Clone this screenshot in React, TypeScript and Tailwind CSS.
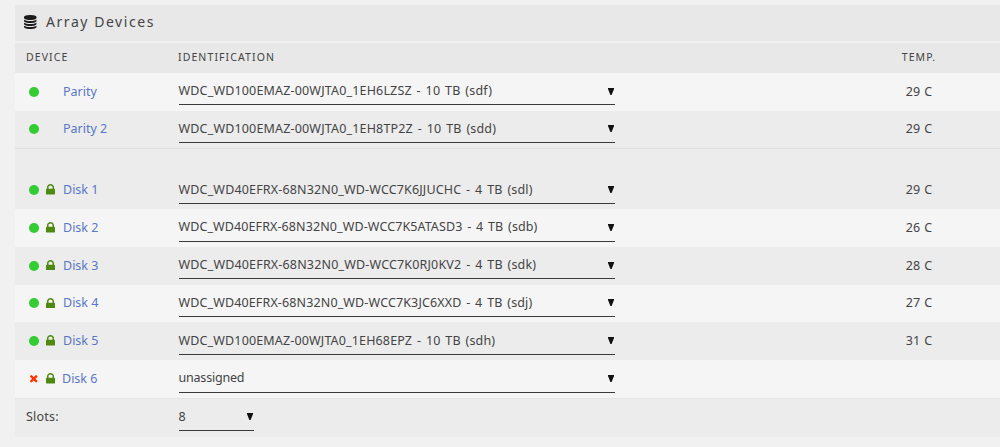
type Device = {
    name: string
    ident: string
    temp?: string
    locked?: boolean
    missing?: boolean
    row: string
    tracking: string
}

const parity: Device[] = [
    { name: 'Parity', ident: 'WDC_WD100EMAZ-00WJTA0_1EH6LZSZ - 10 TB (sdf)', temp: '29 C', row: 'bg-[#f5f5f5]', tracking: 'tracking-[0.17px]' },
    { name: 'Parity 2', ident: 'WDC_WD100EMAZ-00WJTA0_1EH8TP2Z - 10 TB (sdd)', temp: '29 C', row: 'bg-[#ececec]', tracking: 'tracking-[0.17px]' },
]

const disks: Device[] = [
    { name: 'Disk 1', ident: 'WDC_WD40EFRX-68N32N0_WD-WCC7K6JJUCHC - 4 TB (sdl)', temp: '29 C', locked: true, row: 'bg-[#ececec]', tracking: 'tracking-[0.16px]' },
    { name: 'Disk 2', ident: 'WDC_WD40EFRX-68N32N0_WD-WCC7K5ATASD3 - 4 TB (sdb)', temp: '26 C', locked: true, row: 'bg-[#f5f5f5]', tracking: 'tracking-[0.1px]' },
    { name: 'Disk 3', ident: 'WDC_WD40EFRX-68N32N0_WD-WCC7K0RJ0KV2 - 4 TB (sdk)', temp: '28 C', locked: true, row: 'bg-[#ececec]', tracking: 'tracking-[0.17px]' },
    { name: 'Disk 4', ident: 'WDC_WD40EFRX-68N32N0_WD-WCC7K3JC6XXD - 4 TB (sdj)', temp: '27 C', locked: true, row: 'bg-[#f5f5f5]', tracking: 'tracking-[0.13px]' },
    { name: 'Disk 5', ident: 'WDC_WD100EMAZ-00WJTA0_1EH68EPZ - 10 TB (sdh)', temp: '31 C', locked: true, row: 'bg-[#ececec]', tracking: 'tracking-[0.15px]' },
    { name: 'Disk 6', ident: 'unassigned', locked: true, missing: true, row: 'bg-[#f5f5f5]', tracking: 'tracking-[-0.2px]' },
]

const DatabaseIcon = () => (
    <svg viewBox="0 0 1536 1792" className="h-[14px] w-[12.5px] fill-[#1c1c1c]" preserveAspectRatio="none">
        <path d="M768 768q237 0 443-43t325-127v170q0 69-103 128t-280 93.5-385 34.5-385-34.5-280-93.5-103-128v-170q119 84 325 127t443 43zm0 768q237 0 443-43t325-127v170q0 69-103 128t-280 93.5-385 34.5-385-34.5-280-93.5-103-128v-170q119 84 325 127t443 43zm0-384q237 0 443-43t325-127v170q0 69-103 128t-280 93.5-385 34.5-385-34.5-280-93.5-103-128v-170q119 84 325 127t443 43zm0-1152q208 0 385 34.5t280 93.5 103 128v128q0 69-103 128t-280 93.5-385 34.5-385-34.5-280-93.5-103-128v-128q0-69 103-128t280-93.5 385-34.5z" />
    </svg>
)

const LockIcon = () => (
    <svg viewBox="0 128 1152 1408" className="mb-px h-[10.5px] w-[9px] fill-[#4f8a10]" preserveAspectRatio="none">
        <path d="M320 768h512v-192q0-106-75-181t-181-75-181 75-75 181v192zm832 96v576q0 40-28 68t-68 28h-960q-40 0-68-28t-28-68v-576q0-40 28-68t68-28h32v-192q0-184 132-316t316-132 316 132 132 316v192h32q40 0 68 28t28 68z" />
    </svg>
)

const CrossIcon = () => (
    <svg viewBox="110 366 1188 1188" className="ml-px size-[7.5px] fill-[#ff3300]">
        <path d="M1298 1322q0 40-28 68l-136 136q-28 28-68 28t-68-28l-294-294-294 294q-28 28-68 28t-68-28l-136-136q-28-28-28-68t28-68l294-294-294-294q-28-28-28-68t28-68l136-136q28-28 68-28t68 28l294 294 294-294q28-28 68-28t68 28l136 136q28 28 28 68t-28 68l-294 294 294 294q28 28 28 68z" />
    </svg>
)

const Select = ({ value, className }: { value: string; className: string }) => (
    <div className={`flex h-[27.5px] items-center justify-between border-b border-[#3a3a3a] ${className}`}>
        <span className="whitespace-pre [word-spacing:1.4px]">{value}</span>
        <svg viewBox="0 0 6 7" className="mr-px h-[7px] w-[6px] fill-[#111]">
            <path d="M0 0h6v1L3.6 7H2.4L0 1z" />
        </svg>
    </div>
)

const DeviceRow = ({ device }: { device: Device }) => (
    <div className={`flex h-[37.75px] items-center ${device.row}`}>
        <div className="flex w-[163.5px] items-center pl-[14px]">
            <div className="flex w-[17px] items-center">
                {device.missing ? <CrossIcon /> : <span className="size-[10px] rounded-full bg-[#33cc33]" />}
            </div>
            <div className={device.missing ? 'w-4' : 'w-[17px]'}>
                {device.locked && <LockIcon />}
            </div>
            <a className="text-[#5877c6]">{device.name}</a>
        </div>
        <Select value={device.ident} className={`w-[436.5px] ${device.tracking}`} />
        <div className="ml-[254px] w-[100px] text-center [word-spacing:1px]">{device.temp}</div>
    </div>
)

export default function App() {
    return (
        <div className="h-[447px] overflow-hidden bg-[#f1f1f1] pt-[5px] pl-[15px] font-['Noto_Sans',sans-serif] text-[12.5px] leading-5 text-[#444]">
            <div className="flex h-9 items-center gap-[9.5px] bg-[#e8e8e8] pb-0.5 pl-[9px]">
                <DatabaseIcon />
                <h2 className="text-[14px] tracking-[1.55px]">Array Devices</h2>
            </div>
            <div className="mt-0.5 flex h-[29.75px] items-center bg-[#e8e8e8] pb-0.5 text-[10.5px] tracking-[1.1px]">
                <div className="w-[163px] pl-[11px]">DEVICE</div>
                <div className="w-[436.5px]">IDENTIFICATION</div>
                <div className="ml-[254.5px] w-[100px] text-center">TEMP.</div>
            </div>
            {parity.map(device => <DeviceRow key={device.name} device={device} />)}
            <div className="h-[23px] border-t border-[#e0e0e0] bg-[#ececec]" />
            {disks.map(device => <DeviceRow key={device.name} device={device} />)}
            <div className="flex h-[39px] items-center border-t border-[#e4e4e4] bg-[#ececec] pb-px">
                <div className="w-[163.5px] pl-[11px] tracking-[0.2px]">Slots:</div>
                <Select value="8" className="w-[75.5px]" />
            </div>
        </div>
    )
}
